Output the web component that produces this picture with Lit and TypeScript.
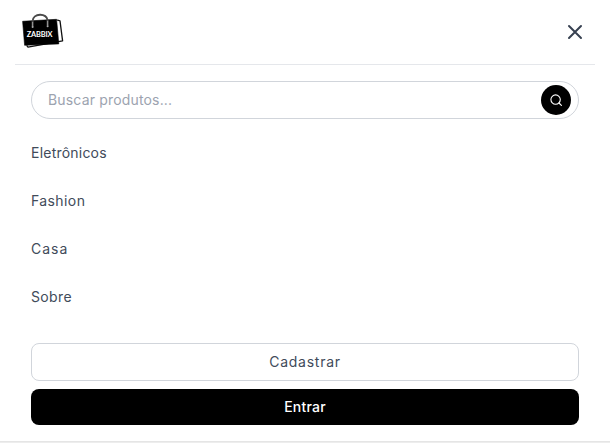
import { LitElement, html, css, svg } from "lit";
import { customElement } from "lit/decorators.js";

const bagLogo = svg`
  <path d="M35.6 7.2 L38 7.8 L40.6 27.8 L6 34.2 L5 32.8" fill="none" stroke="#111" stroke-width="1.3" stroke-linejoin="round" stroke-linecap="round"/>
  <path d="M.6 8.3 L34.6 6.3 L36.8 30.9 L2.6 32.3 Z" fill="#000" stroke="#000" stroke-width=".6" stroke-linejoin="round"/>
  <path d="M10.6 13 V8.5 C10.6 -.2 25.4 -.2 25.6 7.5 V12" fill="none" stroke="#4a4a4a" stroke-width="2" stroke-linecap="round"/>
  <path d="M10.6 9 V13.5 M25.6 8 V12.5" stroke="#999" stroke-width="1"/>
  <circle cx="10.6" cy="14" r="1" fill="#aaa"/>
  <circle cx="25.6" cy="13.2" r="1" fill="#aaa"/>
  <text x="4.8" y="23.9" textLength="25.6" lengthAdjust="spacing" class="brand">ZABBIX</text>
`;

@customElement("app-root")
export class AppRoot extends LitElement {
  static styles = css`
    :host {
      display: block;
      box-sizing: border-box;
      height: 443px;
      overflow: hidden;
      background: #fff;
      color: #414b5a;
      font: 400 14px/20px Inter, "Open Sans", sans-serif;
    }
    * { box-sizing: border-box; }
    .panel {
      height: 443px;
      padding: 0 15px;
      display: flex;
      flex-direction: column;
    }
    header {
      height: 65px;
      flex: none;
      padding: 0 8px 0 7px;
      display: flex;
      align-items: center;
      justify-content: space-between;
      border-bottom: 1px solid #e5e7eb;
    }
    .logo { display: block; margin-bottom: 2px; }
    .brand {
      font: 700 7.4px Lato, sans-serif;
      fill: #fff;
    }
    button {
      font: inherit;
      color: inherit;
      padding: 0;
      border: 0;
      background: none;
    }
    .close { width: 24px; height: 24px; }
    .close svg { display: block; }
    .content {
      padding: 16px 16px 0;
      display: flex;
      flex-direction: column;
    }
    .search {
      height: 38px;
      border: 1px solid #d1d5db;
      border-radius: 19px;
      padding: 0 7px 0 16px;
      display: flex;
      align-items: center;
      justify-content: space-between;
      color: #9ca3af;
    }
    .placeholder { letter-spacing: .17px; }
    .go {
      width: 30px;
      height: 30px;
      border-radius: 50%;
      background: #000;
      display: grid;
      place-items: center;
    }
    nav {
      padding-top: 10px;
      display: flex;
      flex-direction: column;
    }
    nav a { height: 48px; line-height: 48px; }
    .eletronicos { letter-spacing: .22px; }
    .fashion { letter-spacing: .4px; }
    .casa { letter-spacing: 1px; }
    .sobre { letter-spacing: .35px; }
    .actions {
      padding-top: 22px;
      display: flex;
      flex-direction: column;
      gap: 8px;
    }
    .signup {
      height: 38px;
      border: 1px solid #d1d5db;
      border-radius: 8px;
      letter-spacing: .75px;
    }
    .login {
      height: 36px;
      border-radius: 8px;
      background: #000;
      color: #fff;
      font-weight: 500;
      letter-spacing: .2px;
    }
    .edge {
      flex: none;
      margin: auto -15px 0;
      height: 2px;
      background: linear-gradient(#e5e5e5 50%, #ededed 50%);
    }
  `;

  render() {
    return html`
      <div class="panel">
        <header>
          <svg class="logo" width="42" height="36" viewBox="0 0 42 36">${bagLogo}</svg>
          <button class="close" aria-label="Fechar">
            <svg width="24" height="24" viewBox="0 0 24 24" fill="none" stroke="#374151" stroke-width="2" stroke-linecap="round">
              <path d="M6 6l12 12M18 6L6 18"/>
            </svg>
          </button>
        </header>
        <div class="content">
          <div class="search">
            <span class="placeholder">Buscar produtos...</span>
            <button class="go" aria-label="Buscar">
              <svg width="12" height="12" viewBox="0 0 12 12" fill="none" stroke="#fff" stroke-width="1.1" stroke-linecap="round">
                <circle cx="5.6" cy="5.6" r="4.7"/>
                <path d="M9 9l2.4 2.4"/>
              </svg>
            </button>
          </div>
          <nav>
            <a class="eletronicos">Eletrônicos</a>
            <a class="fashion">Fashion</a>
            <a class="casa">Casa</a>
            <a class="sobre">Sobre</a>
          </nav>
          <div class="actions">
            <button class="signup">Cadastrar</button>
            <button class="login">Entrar</button>
          </div>
        </div>
        <div class="edge"></div>
      </div>
    `;
  }
}
